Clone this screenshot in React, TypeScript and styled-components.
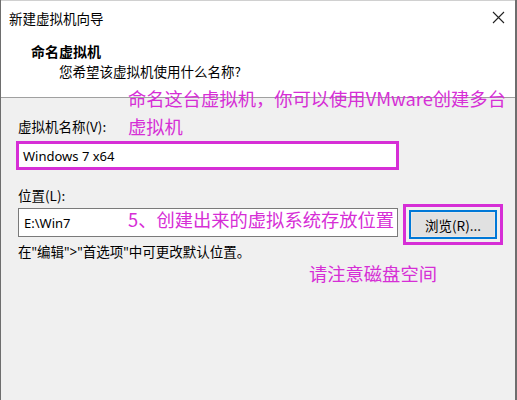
import styled, { createGlobalStyle } from "styled-components";

const GlobalStyle = createGlobalStyle`
  body {
    margin: 0;
    background: #f0f0f0;
    font-family: "Segoe UI", "Noto Sans", "Noto Sans CJK SC", sans-serif;
  }
`;

const MAGENTA = "#d62ed6";

function App() {
  return (
    <>
      <GlobalStyle />
      <Window>
        <TitleBar>
          <Title>新建虚拟机向导</Title>
          <CloseButton aria-label="关闭">
            <svg width="13" height="13" viewBox="0 0 13 13">
              <path d="M1 1L12 12M12 1L1 12" stroke="#222" strokeWidth="1.1" />
            </svg>
          </CloseButton>
        </TitleBar>

        <Header>
          <HeaderTitle>命名虚拟机</HeaderTitle>
          <HeaderText>您希望该虚拟机使用什么名称?</HeaderText>
        </Header>

        <Body>
          <Label $bottom={5}>虚拟机名称(V):</Label>
          <Highlight $width={383}>
            <TextBox $bordered={false}>Windows 7 x64</TextBox>
          </Highlight>

          <Label $top={16} $bottom={3}>位置(L):</Label>
          <Row>
            <TextBox $bordered>E:\Win7</TextBox>
            <ButtonFrame>
              <Button>浏览(R)...</Button>
            </ButtonFrame>
          </Row>
          <Hint>在"编辑"&gt;"首选项"中可更改默认位置。</Hint>
        </Body>

        <Note $left={127} $top={84}>
          命名这台虚拟机，你可以使用VMware创建多台
          <br />
          虚拟机
        </Note>
        <Note $left={127} $top={205}>5、创建出来的虚拟系统存放位置</Note>
        <Note $left={308} $top={259}>请注意磁盘空间</Note>
      </Window>
    </>
  );
}

const Window = styled("div")`
  position: relative;
  width: 517px;
  height: 400px;
  box-sizing: border-box;
  display: flex;
  flex-direction: column;
  background: #f0f0f0;
  border-left: 1px solid #6e6e6e;
  border-right: 2px solid #6e6e6e;
  overflow: hidden;
  color: #000;
`;

const TitleBar = styled("div")`
  height: 33px;
  flex: none;
  display: flex;
  align-items: center;
  justify-content: space-between;
  background: #fff;
  padding: 0 0 0 8px;
  border-top: 1px solid #d0d0d0;
  box-sizing: border-box;
`;

const Title = styled("span")`
  font-size: 13.5px;
  font-family: "Noto Sans CJK SC", sans-serif;
  margin-top: 1px;
`;

const CloseButton = styled("div")`
  width: 34px;
  height: 32px;
  display: flex;
  align-items: center;
  justify-content: center;
`;

const Header = styled("div")`
  height: 65px;
  flex: none;
  box-sizing: border-box;
  background: #fff;
  border-bottom: 1px solid #a0a0a0;
  padding: 8px 0 0 30px;
  font-family: "Noto Sans CJK SC", sans-serif;
`;

const HeaderTitle = styled("div")`
  font-size: 14px;
  font-weight: 700;
  line-height: 20px;
`;

const HeaderText = styled("div")`
  font-size: 13.5px;
  line-height: 20px;
  padding-left: 28px;
`;

const Body = styled("div")`
  flex: 1;
  padding: 19px 0 0 17px;
  font-size: 13.5px;
`;

const Label = styled("div")<{ $top?: number; $bottom: number }>`
  font-family: "Noto Sans CJK SC", sans-serif;
  line-height: 19px;
  margin-top: ${(p) => p.$top ?? 0}px;
  margin-bottom: ${(p) => p.$bottom}px;
`;

const Highlight = styled("div")<{ $width: number }>`
  width: ${(p) => p.$width}px;
  height: 29px;
  margin-left: -2px;
  box-sizing: border-box;
  border: 3px solid ${MAGENTA};
  background: #fff;
  display: flex;
`;

const TextBox = styled("div")<{ $bordered: boolean }>`
  flex: ${(p) => (p.$bordered ? "none" : "1")};
  width: ${(p) => (p.$bordered ? "380px" : "auto")};
  height: ${(p) => (p.$bordered ? "29px" : "auto")};
  box-sizing: border-box;
  background: #fff;
  border: ${(p) => (p.$bordered ? "1px solid #7a7a7a" : "none")};
  padding-left: ${(p) => (p.$bordered ? "5px" : "4px")};
  display: flex;
  align-items: center;
  font-size: 13px;
  font-family: "Noto Sans", "Noto Sans CJK SC", sans-serif;
`;

const Row = styled("div")`
  display: flex;
  align-items: flex-start;
  gap: 5px;
`;

const ButtonFrame = styled("div")`
  width: 100px;
  height: 41px;
  box-sizing: border-box;
  border: 3px solid ${MAGENTA};
  padding: 3px;
  margin-top: -4px;
  display: flex;
`;

const Button = styled("div")`
  flex: 1;
  box-sizing: border-box;
  border: 2px solid #0078d7;
  background: #e1e1e1;
  box-shadow: inset 0 0 0 1px #e8e8e8;
  display: flex;
  align-items: center;
  justify-content: center;
  font-size: 13.5px;
  font-family: "Noto Sans CJK SC", sans-serif;
`;

const Hint = styled("div")`
  font-family: "Noto Sans", "Noto Sans CJK SC", sans-serif;
  line-height: 19px;
  margin-top: -2px;
`;

const Note = styled("div")<{ $left: number; $top: number }>`
  position: absolute;
  left: ${(p) => p.$left}px;
  top: ${(p) => p.$top}px;
  color: ${MAGENTA};
  font-family: "Noto Sans CJK SC", sans-serif;
  font-size: 18.3px;
  line-height: 28px;
  white-space: nowrap;
`;

export default App;
